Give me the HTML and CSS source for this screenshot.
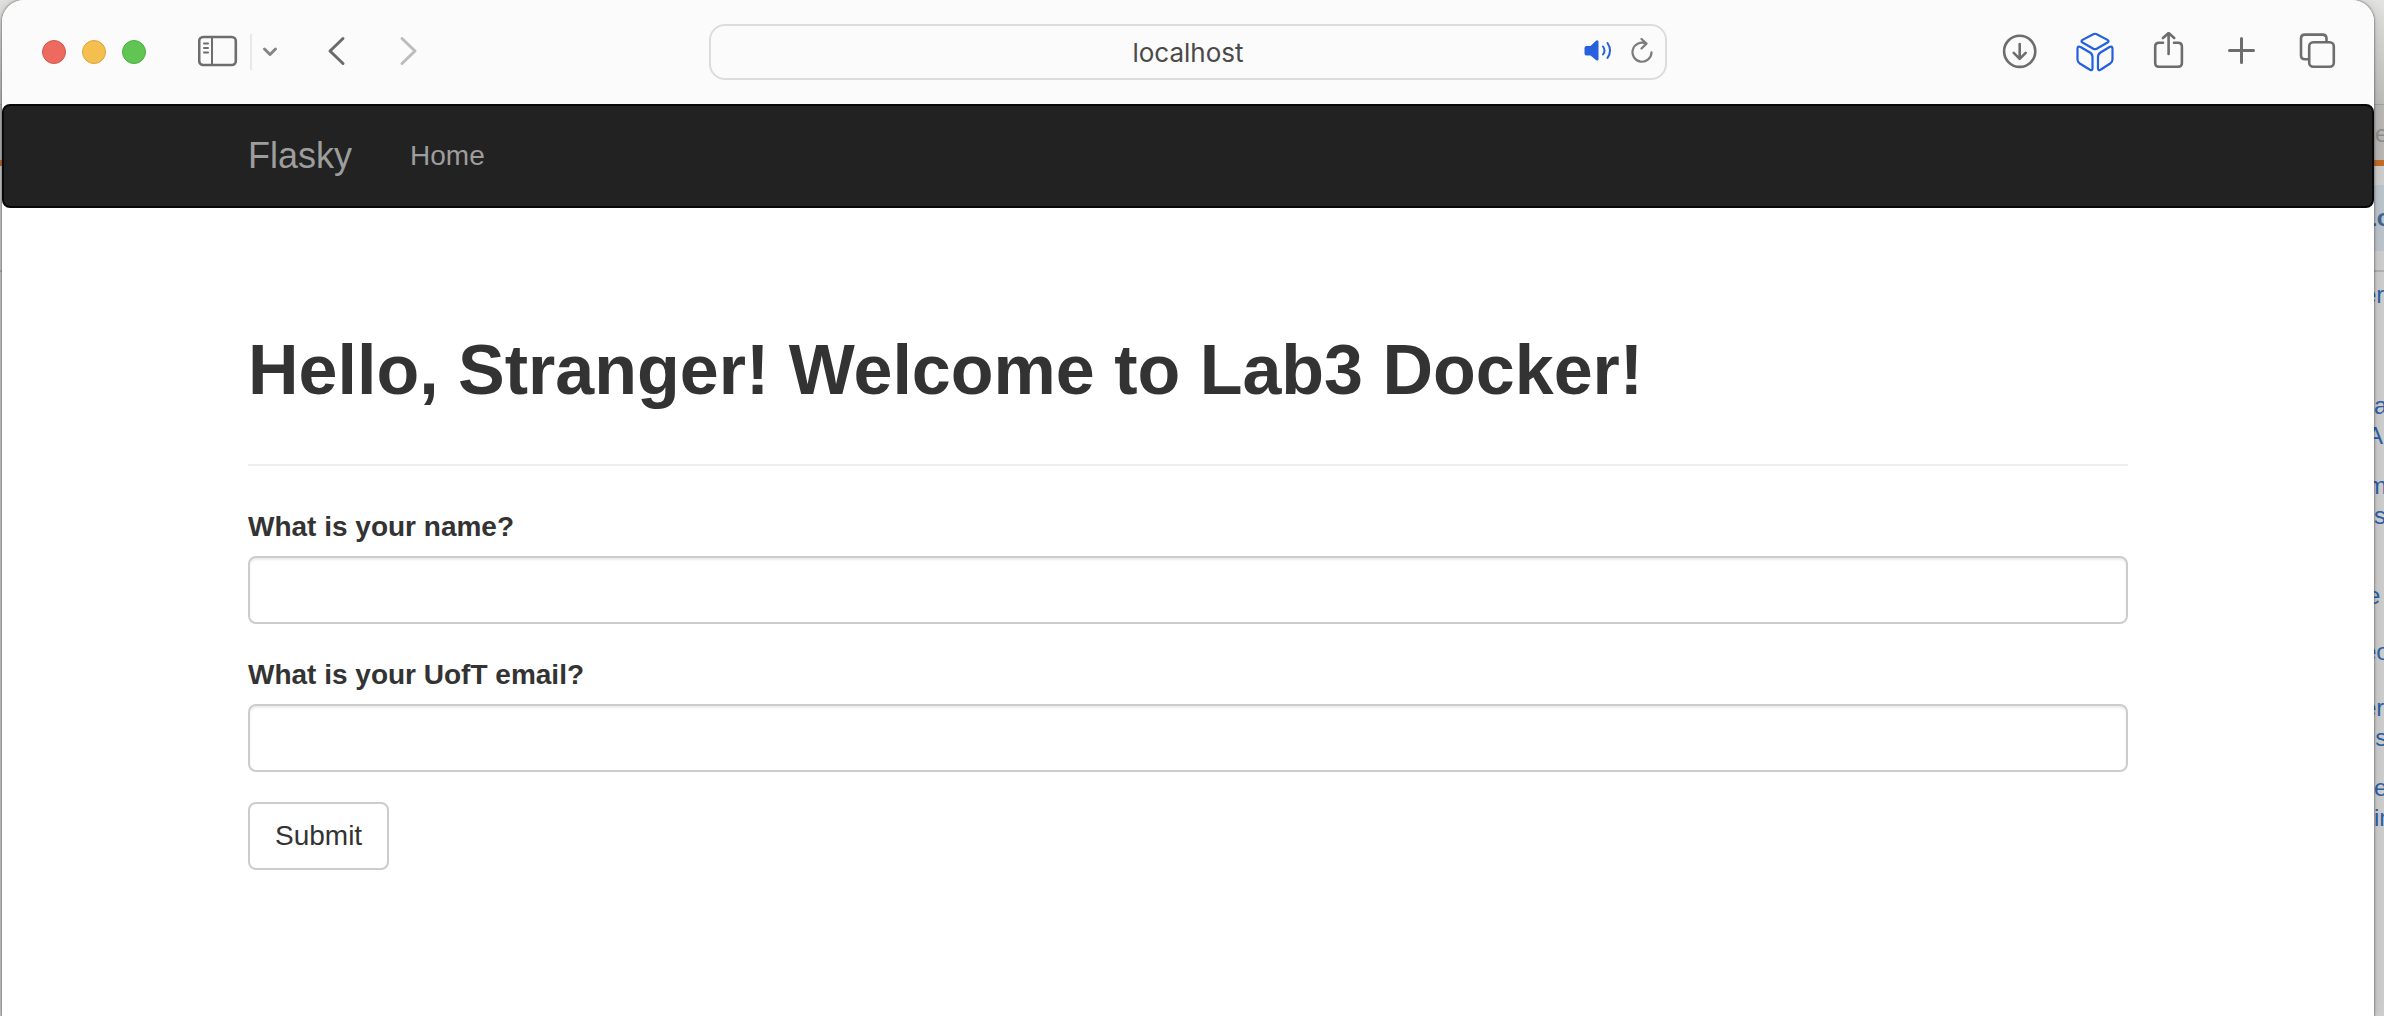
FILE: index.html
```html
<!DOCTYPE html>
<html lang="en">
<head>
<meta charset="utf-8">
<title>Flasky</title>
<link rel="stylesheet" href="styles.css">
</head>
<body>
<div class="desktop">
  <aside class="backdrop">
    <div class="back-chrome"></div>
    <div class="back-tabs"><span class="sliver tab-text">se</span></div>
    <div class="back-nav"><span class="sliver nav-text">Lo</span></div>
    <div class="back-links">
      <a class="sliver cut" href="#">er</a>
      <a class="sliver far" href="#">a</a>
      <a class="sliver wide" href="#">A</a>
      <a class="sliver para wide" href="#">m</a>
      <a class="sliver" href="#">s</a>
      <a class="sliver item wide" href="#">e</a>
      <a class="sliver topic cut" href="#">eo</a>
      <a class="sliver topic cut" href="#">er</a>
      <a class="sliver tight" href="#">is</a>
      <a class="sliver para" href="#">e</a>
      <a class="sliver" href="#">in</a>
    </div>
  </aside>

  <div class="window">
    <header class="toolbar">
      <div class="tools">
        <div class="lights">
          <button class="light close" aria-label="Close"></button>
          <button class="light minimize" aria-label="Minimize"></button>
          <button class="light maximize" aria-label="Maximize"></button>
        </div>
        <button class="tool" aria-label="Sidebar">
          <svg width="40" height="40" viewBox="0 0 40 40" fill="none" stroke="#6d6d6d" stroke-width="2" stroke-linecap="round">
            <rect x="1.200" y="5" width="36.600" height="28" rx="4" stroke-width="2.600"/>
            <path d="M14 5v28M6 11.500h4M6 16h4M6 20.500h4"/>
          </svg>
        </button>
        <span class="divider"></span>
        <button class="tool small" aria-label="Tab groups">
          <svg width="20" height="40" viewBox="0 0 20 40" fill="none" stroke="#858589" stroke-width="3" stroke-linecap="round" stroke-linejoin="round">
            <path d="M4.500 17l5.500 5.500 5.500-5.500"/>
          </svg>
        </button>
        <div class="history">
          <button class="tool" aria-label="Back">
            <svg width="40" height="40" viewBox="0 0 40 40" fill="none" stroke="#6b6b6b" stroke-width="3" stroke-linecap="round" stroke-linejoin="round">
              <path d="M27 6.500L14 19 27 31.500"/>
            </svg>
          </button>
          <button class="tool" aria-label="Forward">
            <svg width="40" height="40" viewBox="0 0 40 40" fill="none" stroke="#bcbcbc" stroke-width="3" stroke-linecap="round" stroke-linejoin="round">
              <path d="M14 6.500l13 12.500L14 31.500"/>
            </svg>
          </button>
        </div>
      </div>

      <div class="address">
        <input class="address-input" type="text" value="localhost" aria-label="Address">
        <div class="address-tools">
          <button class="tool mini" aria-label="Mute">
            <svg width="28" height="28" viewBox="0 0 28 28" fill="none" stroke="#2760dc" stroke-width="2" stroke-linecap="round">
              <path d="M0.500 10Q0.500 8 2.500 8H6.500L12 2.800Q14.500 1.500 14.500 4V21Q14.500 23.500 12 22L6.500 17.500H2.500Q0.500 17.500 0.500 15.500Z" fill="#2760dc" stroke="none"/>
              <path d="M19 8.500Q22 12.500 19 16.500M23.500 5Q28.500 12.500 23.500 20"/>
            </svg>
          </button>
          <button class="tool mini" aria-label="Reload">
            <svg width="28" height="28" viewBox="0 0 28 28" fill="none" stroke="#7c7c7c" stroke-width="2.200" stroke-linecap="round" stroke-linejoin="round">
              <path d="M23.500 14.300A9.500 9.500 0 1 1 18 5.600M13.500 1L18.500 5.600 13.500 10.500"/>
            </svg>
          </button>
        </div>
      </div>

      <div class="actions">
        <button class="tool" aria-label="Downloads">
          <svg width="40" height="40" viewBox="0 0 40 40" fill="none" stroke="#6d6d6d" stroke-width="2.600" stroke-linecap="round" stroke-linejoin="round">
            <circle cx="17.700" cy="19.300" r="15.600"/>
            <path d="M17.700 12v14.500M11.700 20.800l6 6 6-6"/>
          </svg>
        </button>
        <button class="tool" aria-label="Extension">
          <svg width="40" height="40" viewBox="0 0 40 40" fill="none" stroke="#235fe0" stroke-width="2.200" stroke-linejoin="round">
            <path d="M17.300 2.200Q19 1.300 20.700 2.200L31.500 7.900Q33.500 9.200 31.500 10.500L20.700 16.700Q19 17.600 17.300 16.700L6.500 10.500Q4.500 9.200 6.500 7.900Z"/>
            <path d="M1.500 17Q1.500 13.500 4.500 15L14 20.500Q16.500 22 16.500 25V36.500Q16.500 39 14 37.700L3.800 31.500Q1.500 30 1.500 27.500Z"/>
            <path d="M36.500 17Q36.500 13.500 33.500 15L24.500 20.500Q22 22 22 25V36.500Q22 39 24.500 37.700L34.200 31.500Q36.500 30 36.500 27.500Z"/>
          </svg>
        </button>
        <button class="tool" aria-label="Share">
          <svg width="40" height="40" viewBox="0 0 40 40" fill="none" stroke="#6d6d6d" stroke-width="2.600" stroke-linecap="round" stroke-linejoin="round">
            <path d="M13 10.800H9Q5.200 10.800 5.200 14.600V31Q5.200 34.800 9 34.800H28Q31.900 34.800 31.900 31V14.600Q31.900 10.800 28 10.800H24M18.600 22V1.500M13 6L18.600 1 24.200 6"/>
          </svg>
        </button>
        <button class="tool" aria-label="New tab">
          <svg width="40" height="40" viewBox="0 0 40 40" fill="none" stroke="#6d6d6d" stroke-width="3" stroke-linecap="round">
            <path d="M5.500 18.500h24M17.500 6.500v24"/>
          </svg>
        </button>
        <button class="tool" aria-label="Tab overview">
          <svg width="40" height="40" viewBox="0 0 40 40" fill="none" stroke="#6d6d6d" stroke-width="2.600">
            <rect x="11.200" y="10.200" width="24.600" height="24.600" rx="4"/>
            <path d="M10.500 27.300H7Q3 27.300 3 23.300V6.500Q3 2.600 7 2.600H24.500Q28.500 2.600 28.500 6.500V9.500"/>
          </svg>
        </button>
      </div>
    </header>

    <nav class="navbar">
      <div class="container nav-row">
        <a class="brand" href="#">Flasky</a>
        <a class="nav-link" href="#">Home</a>
      </div>
    </nav>

    <main class="container">
      <div class="page-header">
        <h1>Hello, Stranger! Welcome to Lab3 Docker!</h1>
      </div>
      <form>
        <div class="form-group">
          <label for="name">What is your name?</label>
          <input class="form-control" id="name" type="text">
        </div>
        <div class="form-group">
          <label for="email">What is your UofT email?</label>
          <input class="form-control" id="email" type="text">
        </div>
        <button class="submit" type="submit">Submit</button>
      </form>
    </main>
  </div>
</div>
</body>
</html>
```
FILE: styles.css
```css
* {
  box-sizing: border-box;
}

body {
  margin: 0;
  font-family: "Liberation Sans", Arial, sans-serif;
  font-size: 28px;
  line-height: 40px;
  color: #333;
}

button,
input {
  font: inherit;
  color: inherit;
}

button {
  padding: 0;
  border: 0;
  background: none;
}

a {
  text-decoration: none;
}

/* The browser window lies over the page behind it. */
.desktop {
  display: grid;
  min-height: 100vh;
}

.backdrop,
.window {
  grid-area: 1 / 1;
  min-width: 0;
}

.backdrop {
  background: #d0d0d0;
  font-size: 24px;
  line-height: 30px;
  overflow: hidden;
}

.sliver {
  display: block;
  width: 10px;
  margin-left: auto;
  overflow: hidden;
  white-space: nowrap;
}

.back-chrome {
  height: 104px;
  background: linear-gradient(#e4e4e2, #bebebc);
}

.back-tabs {
  height: 62px;
  padding-top: 14px;
  border-top: 1px solid #a5a5a3;
  border-bottom: 6px solid #c46e29;
  background: #bab9b7;
}

.tab-text {
  color: #8e8e8c;
  text-indent: -11px;
}

.back-nav {
  height: 106px;
  padding: 19px 0;
  border-bottom: 2px solid #b0b2b6;
}

.nav-text {
  height: 66px;
  line-height: 66px;
  background: #bec6ce;
  color: #426791;
  font-weight: bold;
  text-indent: -12px;
}

.back-links {
  padding-top: 8px;
}

.back-links a {
  color: #2b62a9;
}

.back-links .cut {
  text-indent: -11px;
}

.back-links .wide {
  text-indent: -7px;
}

.back-links .tight {
  text-indent: -4px;
}

.back-links .far {
  margin-top: 81px;
}

.back-links .para {
  margin-top: 20px;
}

.back-links .item {
  margin-top: 50px;
}

.back-links .topic {
  margin-top: 26px;
}

.window {
  margin: 0 10px 0 2px;
  border-radius: 22px 22px 0 0;
  background: #fff;
  box-shadow: 0 0 2px 1px rgba(0, 0, 0, 0.3), 0 0 16px rgba(0, 0, 0, 0.15);
}

.toolbar {
  display: grid;
  grid-template-columns: 1fr minmax(0, 958px) 1fr;
  align-items: center;
  height: 104px;
  padding: 0 36px;
  border-radius: 22px 22px 0 0;
  background: #fbfbfb;
}

.tools,
.lights,
.history,
.actions,
.address-tools {
  display: flex;
  align-items: center;
}

.lights {
  gap: 16px;
  margin: 0 52px 0 4px;
}

.light {
  width: 24px;
  height: 24px;
  border: 1px solid;
  border-radius: 50%;
}

.close {
  background: #ec6a5e;
  border-color: #d5564b;
}

.minimize {
  background: #f5bf4f;
  border-color: #dba43b;
}

.maximize {
  background: #61c554;
  border-color: #4eae41;
}

.tool {
  width: 40px;
  height: 40px;
}

.tool svg {
  display: block;
}

.small {
  width: 20px;
}

.mini {
  width: 28px;
  height: 28px;
}

.divider {
  width: 2px;
  height: 36px;
  margin: 0 8px 0 12px;
  background: #e8e8e8;
}

.history {
  gap: 32px;
  margin-left: 36px;
}

.actions {
  justify-content: flex-end;
  gap: 34px;
}

.address {
  display: grid;
  align-items: center;
}

.address-input,
.address-tools {
  grid-area: 1 / 1;
}

.address-input {
  width: 100%;
  height: 56px;
  padding: 0;
  border: 2px solid #dcdcdc;
  border-radius: 16px;
  background: #fbfbfb;
  color: #4a4a4a;
  font-family: Inter, sans-serif;
  font-size: 26px;
  text-align: center;
}

.address-tools {
  justify-self: end;
  gap: 16px;
  margin-right: 11px;
}

.navbar {
  border: 2px solid #080808;
  border-radius: 8px;
  background: #222;
}

.container {
  max-width: 1940px;
  margin: 0 auto;
  padding: 0 30px;
}

.nav-row {
  display: flex;
  align-items: center;
  gap: 58px;
  height: 100px;
}

.nav-row a {
  color: #9d9d9d;
}

.brand {
  font-size: 36px;
}

.page-header {
  margin: 120px 0 40px;
  padding-bottom: 52px;
  border-bottom: 2px solid #eee;
}

h1 {
  margin: 0;
  font-size: 70px;
  font-weight: bold;
  line-height: 84px;
}

label {
  display: block;
  margin-bottom: 8px;
  font-weight: bold;
  line-height: 42px;
}

.form-group {
  margin-bottom: 30px;
}

.form-control {
  display: block;
  width: 100%;
  height: 68px;
  padding: 12px 24px;
  border: 2px solid #ccc;
  border-radius: 8px;
  background: #fff;
  box-shadow: inset 0 2px 2px rgba(0, 0, 0, 0.075);
}

.submit {
  height: 68px;
  padding: 0 25px;
  border: 2px solid #ccc;
  border-radius: 8px;
  background: #fff;
}
```
